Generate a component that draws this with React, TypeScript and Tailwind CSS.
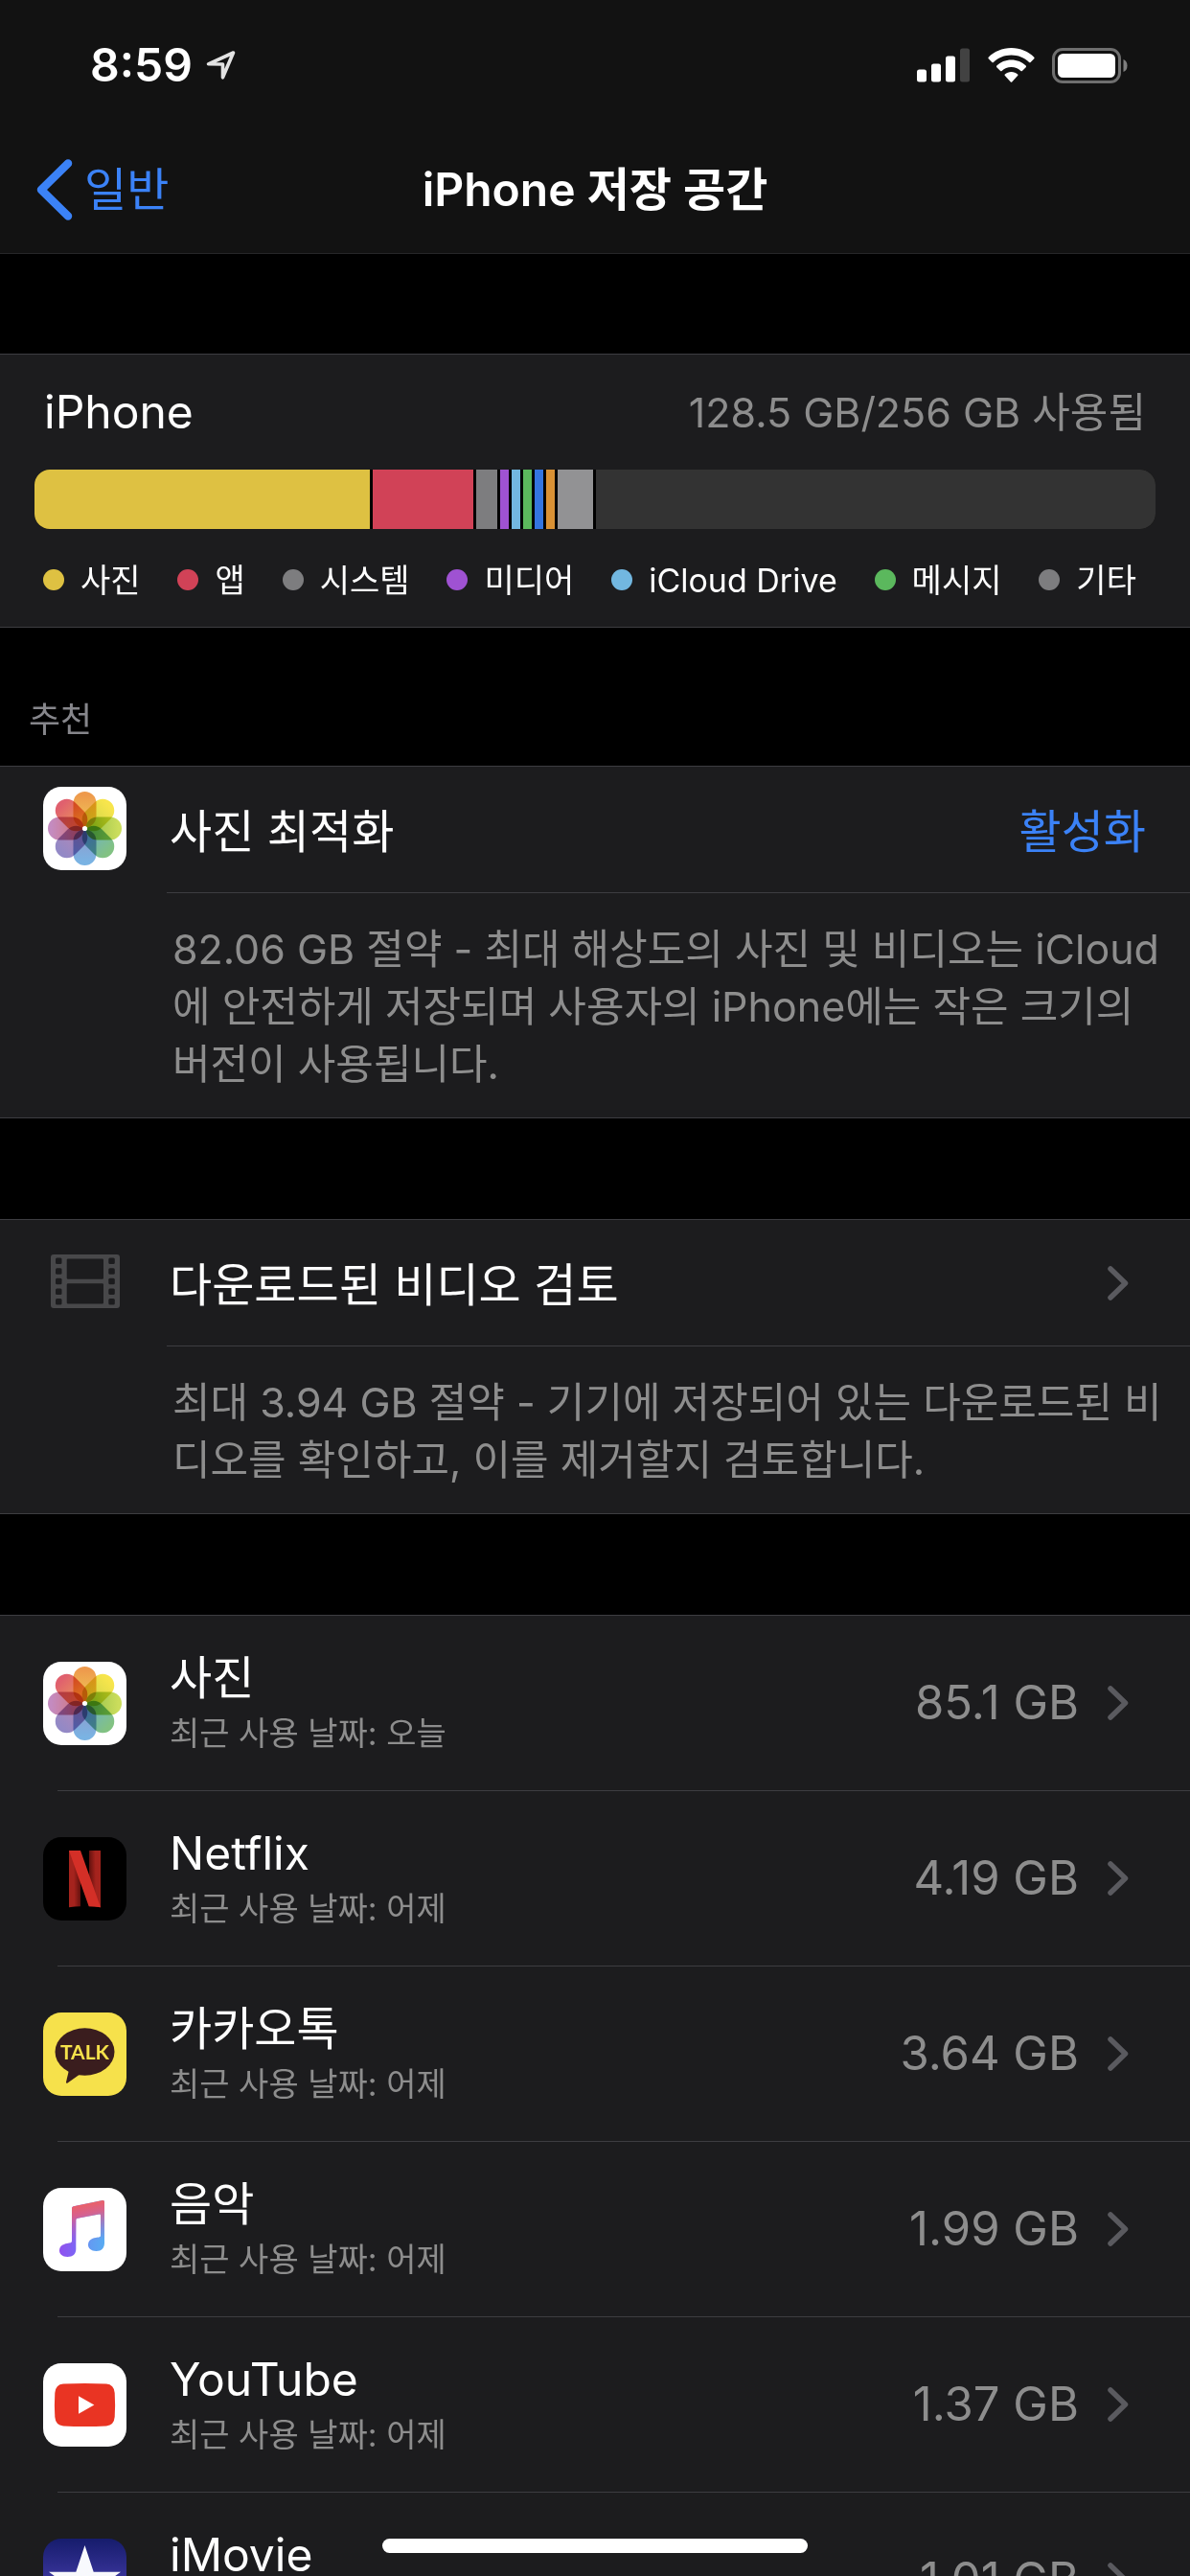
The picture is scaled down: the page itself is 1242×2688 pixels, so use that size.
import type { ReactNode } from 'react';

const segments = [
  { name: '사진', size: 350, color: 'bg-[#dec142]' },
  { name: '앱', size: 105, color: 'bg-[#d14257]' },
  { name: '시스템', size: 22, color: 'bg-[#7d7d7f]' },
  { name: '미디어', size: 9, color: 'bg-[#9f52d2]' },
  { name: 'iCloud Drive', size: 9, color: 'bg-[#72b7e0]' },
  { name: '메시지', size: 9, color: 'bg-[#5bb85d]' },
  { name: 'Mail', size: 9, color: 'bg-[#3475e0]' },
  { name: 'Books', size: 9, color: 'bg-[#d99134]' },
  { name: '기타', size: 38, color: 'bg-[#929294]' },
  { name: '여유 공간', size: 584, color: 'bg-[#333333]' },
];

const legend = [
  { name: '사진', color: 'bg-[#dec142]' },
  { name: '앱', color: 'bg-[#d14257]' },
  { name: '시스템', color: 'bg-[#7d7d7f]' },
  { name: '미디어', color: 'bg-[#9f52d2]' },
  { name: 'iCloud Drive', color: 'bg-[#72b7e0]' },
  { name: '메시지', color: 'bg-[#5bb85d]' },
  { name: '기타', color: 'bg-[#7d7d7f]' },
];

// clockwise from the top, outer colour then inner colour
const petals = [
  ['#ee9a4c', '#efc056'],
  ['#f7e54c', '#d6d84a'],
  ['#cbdd5c', '#9fc64e'],
  ['#82c283', '#72b4bb'],
  ['#7ab3e3', '#8c9fd0'],
  ['#9389c6', '#b088b8'],
  ['#c48bc0', '#d07884'],
  ['#e0606e', '#e98f5c'],
];

const PhotosIcon = () => (
  <svg viewBox="0 0 87 87" className="size-[87px] shrink-0" aria-hidden="true">
    <defs>
      {petals.map(([outer, inner], i) => (
        <linearGradient key={i} id={`petal-${i}`} x1="0" y1="0" x2="0" y2="1">
          <stop offset="0.1" stopColor={outer} />
          <stop offset="0.75" stopColor={inner} />
        </linearGradient>
      ))}
    </defs>
    <rect width="87" height="87" rx="19" fill="#fff" />
    <g className="isolate">
      {petals.map((_, i) => (
        <rect
          key={i}
          x="31.5"
          y="5"
          width="24"
          height="37.5"
          rx="12"
          fill={`url(#petal-${i})`}
          transform={`rotate(${i * 45} 43.5 43.5)`}
          className="mix-blend-multiply"
        />
      ))}
    </g>
    <circle cx="43.5" cy="43.5" r="2.6" fill="#fff" />
  </svg>
);

const NetflixIcon = () => (
  <svg viewBox="0 0 87 87" className="size-[87px] shrink-0" aria-hidden="true">
    <defs>
      <linearGradient id="nf-left" x1="0" y1="0.35" x2="1" y2="0.25">
        <stop offset="0.4" stopColor="#a5231d" />
        <stop offset="1" stopColor="#5c0f0c" />
      </linearGradient>
      <linearGradient id="nf-right" x1="1" y1="0.65" x2="0" y2="0.75">
        <stop offset="0.4" stopColor="#a5231d" />
        <stop offset="1" stopColor="#5c0f0c" />
      </linearGradient>
    </defs>
    <rect width="87" height="87" rx="19" fill="#000" />
    <path d="M27 14h12v58.300q-6 .2-12 .9z" fill="url(#nf-left)" />
    <path d="M48 14h12v59.200q-6-.7-12-.9z" fill="url(#nf-right)" />
    <path d="M27 14h12l21 59.200q-6-.8-12.300-.9z" fill="#d42f27" />
  </svg>
);

const KakaoIcon = () => (
  <svg viewBox="0 0 87 87" className="size-[87px] shrink-0" aria-hidden="true">
    <rect width="87" height="87" rx="19" fill="#f6e14b" />
    <ellipse cx="43.500" cy="41" rx="31" ry="24.700" fill="#3a1d1e" />
    <path d="M27 60l-3 12.500q-.2 2 1.600 1L39 64z" fill="#3a1d1e" />
    <text
      x="43.500"
      y="49"
      textAnchor="middle"
      fill="#f6e14b"
      className="font-['Lato',sans-serif] text-[21px] font-bold"
    >
      TALK
    </text>
  </svg>
);

const notePath =
  'M30 21.500q0-1.800 1.800-2.200l30.200-6.300q2-.3 2 1.500V57.500C64 62.500 61 66 55.500 66C50 66 47 63 47 59.500C47 55 50.500 52.500 55 52C58.500 51.500 60 51.500 60 49.500V28.500q0-1.300-1.500-1L35.800 31.700q-1.500.3-1.500 1.600V64C34.300 69 31 72 25.500 72C20 72 17 69 17 65.500C17 61 20.500 58.800 25 58C28.500 57.400 30 57.400 30 55.500z';

const MusicIcon = () => (
  <svg viewBox="0 0 87 87" className="size-[87px] shrink-0" aria-hidden="true">
    <defs>
      <linearGradient id="note-base" x1="17" y1="0" x2="64" y2="0" gradientUnits="userSpaceOnUse">
        <stop offset="0" stopColor="#9050ee" />
        <stop offset="0.4" stopColor="#7a68f6" />
        <stop offset="0.7" stopColor="#629cf2" />
        <stop offset="1" stopColor="#58acf2" />
      </linearGradient>
      <linearGradient id="note-top" x1="34" y1="16" x2="42" y2="58" gradientUnits="userSpaceOnUse">
        <stop offset="0" stopColor="#f0605f" />
        <stop offset="0.3" stopColor="#dc6088" stopOpacity="0.950" />
        <stop offset="1" stopColor="#b060d0" stopOpacity="0" />
      </linearGradient>
    </defs>
    <rect width="87" height="87" rx="19" fill="#fff" />
    <path d={notePath} fill="url(#note-base)" />
    <path d={notePath} fill="url(#note-top)" />
  </svg>
);

const YouTubeIcon = () => (
  <svg viewBox="0 0 87 87" className="size-[87px] shrink-0" aria-hidden="true">
    <rect width="87" height="87" rx="19" fill="#fff" />
    <path
      d="M21 21.600Q43.500 20.300 66 21.600Q74 22.300 74.700 31Q75.500 43.500 74.700 56Q74 64.700 66 65.400Q43.500 66.700 21 65.400Q13 64.700 12.300 56Q11.500 43.500 12.300 31Q13 22.300 21 21.600z"
      fill="#e93423"
    />
    <path d="M37 34.300v18.400l16.300-9.200z" fill="#fff" />
  </svg>
);

const IMovieIcon = () => (
  <svg viewBox="0 0 87 87" className="size-[87px] shrink-0" aria-hidden="true">
    <defs>
      <linearGradient id="imovie-bg" x1="0" y1="0" x2="0" y2="1">
        <stop offset="0" stopColor="#161c6c" />
        <stop offset="0.5" stopColor="#3a359c" />
        <stop offset="1" stopColor="#8a4fc0" />
      </linearGradient>
    </defs>
    <rect width="87" height="87" rx="19" fill="url(#imovie-bg)" />
    <path
      d="M43.500 7l9.200 27.700H81L58.300 51.500l8.700 27L43.500 62 20 78.500l8.700-27L6 34.700h28.300z"
      fill="#f8f9fd"
    />
  </svg>
);

const FilmIcon = () => (
  <svg viewBox="0 0 72 56" className="ml-2 h-14 w-[72px] shrink-0" fill="#48484a" aria-hidden="true">
    <path
      fillRule="evenodd"
      d="M3 0h66a3 3 0 0 1 3 3v50a3 3 0 0 1-3 3H3a3 3 0 0 1-3-3V3a3 3 0 0 1 3-3zM18 4.500q-1.300 0-1.300 1.300V24.500q0 1.300 1.300 1.300H53.700q1.300 0 1.300-1.300V5.800q0-1.300-1.300-1.300zM18 30.200q-1.300 0-1.300 1.300V50.200q0 1.300 1.300 1.300H53.700q1.300 0 1.300-1.300V31.500q0-1.300-1.300-1.300z"
    />
    {[3.5, 14.2, 24.8, 35.4, 46].map((y) => (
      <g key={y} fill="#1c1c1e">
        <rect x="5" y={y} width="6.500" height="6.500" rx="1.500" />
        <rect x="60.300" y={y} width="6.500" height="6.500" rx="1.500" />
      </g>
    ))}
  </svg>
);

const Chevron = () => (
  <svg viewBox="0 0 22 36" className="h-9 w-[22px] shrink-0" fill="none" aria-hidden="true">
    <path d="M3 3l15.500 15L3 33" stroke="#5a5a5f" strokeWidth="5.500" strokeLinecap="round" strokeLinejoin="round" />
  </svg>
);

const apps = [
  { name: '사진', used: '오늘', size: '85.1 GB', icon: PhotosIcon },
  { name: 'Netflix', used: '어제', size: '4.19 GB', icon: NetflixIcon },
  { name: '카카오톡', used: '어제', size: '3.64 GB', icon: KakaoIcon },
  { name: '음악', used: '어제', size: '1.99 GB', icon: MusicIcon },
  { name: 'YouTube', used: '어제', size: '1.37 GB', icon: YouTubeIcon },
  { name: 'iMovie', used: '어제', size: '1.01 GB', icon: IMovieIcon },
];

const StatusBar = () => (
  <div className="flex h-[132px] items-center justify-between pt-1 pr-16 pl-[94px]">
    <div className="flex items-center gap-[14px]">
      <span className="text-5xl font-semibold">8:59</span>
      <svg viewBox="0 0 32 32" className="size-8" fill="none" aria-hidden="true">
        <path d="M2.500 14.800L28.500 3 17.500 28.800V15z" stroke="#e2e2e2" strokeWidth="3.600" strokeLinejoin="round" />
      </svg>
    </div>
    <div className="flex items-center gap-[18px]">
      <svg viewBox="0 0 56 36" className="h-9 w-14" fill="#fff" aria-hidden="true">
        <rect x="0" y="22.500" width="10" height="13" rx="2.500" />
        <rect x="15" y="16.500" width="10" height="19" rx="2.500" />
        <rect x="30" y="8.500" width="10" height="27" rx="2.500" />
        <rect x="45" y="0.500" width="10" height="35" rx="2.500" fill="#424242" />
      </svg>
      <svg viewBox="0 0 49 36" className="h-9 w-[49px]" fill="#fff" aria-hidden="true">
        <path d="M24.500 0C34 0 42.500 3.800 48.300 9.700q.7.800 0 1.600L44.600 15q-.8.700-1.500 0C38.200 10.300 31.700 7.600 24.500 7.600S10.800 10.300 5.900 15q-.7.700-1.500 0L.7 11.300q-.7-.8 0-1.600C6.500 3.800 15 0 24.500 0z" />
        <path d="M24.500 12.600c6 0 11.300 2.300 15.200 6q.8.800 0 1.600l-3.800 3.700q-.7.700-1.500 0c-2.600-2.400-6-3.800-9.900-3.800s-7.300 1.400-9.900 3.800q-.8.700-1.500 0l-3.800-3.700q-.8-.8 0-1.600c3.900-3.700 9.200-6 15.200-6z" />
        <path d="M24.500 25c2.600 0 4.900 1 6.600 2.600q.7.700 0 1.500l-5.900 6.300q-.7.700-1.400 0l-5.900-6.300q-.7-.8 0-1.500C19.600 26 21.900 25 24.500 25z" />
      </svg>
      <svg viewBox="0 0 80 37" className="h-[37px] w-20" aria-hidden="true">
        <rect x="1.500" y="1.500" width="69" height="34" rx="9.500" fill="none" stroke="#6f6f6f" strokeWidth="3" />
        <rect x="6" y="6" width="60" height="25" rx="5.500" fill="#fff" />
        <path d="M74.500 12q4 1.500 4 6.500t-4 6.500z" fill="#7f7f7f" />
      </svg>
    </div>
  </div>
);

const NavBar = () => (
  <nav className="grid h-[132px] grid-cols-[1fr_auto_1fr] items-center px-[38px]">
    <a href="#general" className="flex items-center gap-3 text-5xl text-[#3b82f7]">
      <svg viewBox="0 0 38 64" className="h-16 w-[38px]" fill="none" aria-hidden="true">
        <path d="M33 4.500L5 32l28 27.500" stroke="currentColor" strokeWidth="8.500" strokeLinecap="round" strokeLinejoin="round" />
      </svg>
      일반
    </a>
    <h1 className="text-5xl font-semibold">iPhone 저장 공간</h1>
  </nav>
);

const StorageUsage = () => (
  <section className="mt-[104px] border-y border-[#3d3d41] bg-[#1c1c1e] px-9 py-6">
    <div className="flex h-[72px] items-center justify-between px-[10px]">
      <h2 className="text-5xl">iPhone</h2>
      <p className="text-[43px] text-[#8d8d8d]">128.5 GB/256 GB 사용됨</p>
    </div>
    <div className="mt-6 flex h-[62px] gap-[3px] overflow-hidden rounded-2xl bg-black">
      {segments.map((s) => (
        <div key={s.name} className={`basis-0 ${s.color}`} style={{ flexGrow: s.size }} />
      ))}
    </div>
    <ul className="mt-7 flex h-[50px] items-center justify-between pr-[20px] pl-[9px]">
      {legend.map((l) => (
        <li key={l.name} className="flex items-center gap-[17px] text-[34px] whitespace-nowrap">
          <span className={`size-[22px] rounded-full ${l.color}`} />
          {l.name}
        </li>
      ))}
    </ul>
  </section>
);

type SuggestionProps = {
  icon: ReactNode;
  title: string;
  action: ReactNode;
  children: ReactNode;
};

const Suggestion = ({ icon, title, action, children }: SuggestionProps) => (
  <section className="flex border-y border-[#3d3d41] bg-[#1c1c1e]">
    <div className="flex h-[128px] w-[174px] shrink-0 items-center pl-[45px]">{icon}</div>
    <div className="flex-1">
      <div className="flex h-[132px] items-center justify-between border-b border-[#3d3d41] pr-[46px] pl-[3px]">
        <h3 className="pt-1 text-5xl">{title}</h3>
        {action}
      </div>
      <p className="pt-7 pr-7 pb-[26px] pl-[6px] text-[43px] leading-[60px] text-[#8d8d8d]">{children}</p>
    </div>
  </section>
);

const AppList = () => (
  <ul className="mt-[105px] border-t border-[#3d3d41] bg-[#1c1c1e]">
    {apps.map((app) => {
      const Icon = app.icon;
      return (
        <li key={app.name}>
          <a href={`#${app.name}`} className="flex h-[182px] items-center pr-16 pl-[45px]">
            <Icon />
            <div className="ml-[45px] flex-1">
              <p className="text-5xl leading-[64px]">{app.name}</p>
              <p className="text-[34px] leading-[52px] text-[#8d8d8d]">최근 사용 날짜: {app.used}</p>
            </div>
            <span className="mr-[30px] text-[49px] text-[#8d8d8d]">{app.size}</span>
            <Chevron />
          </a>
          <div className="ml-[60px] h-px bg-[#3d3d41]" />
        </li>
      );
    })}
  </ul>
);

const App = () => {
  return (
    <div className="relative h-screen overflow-hidden bg-black font-['Inter','Noto_Sans_CJK_KR',sans-serif] text-white">
      <header className="border-b border-[#262628] bg-[#121212]">
        <StatusBar />
        <NavBar />
      </header>
      <main>
        <StorageUsage />
        <h2 className="px-[30px] pt-[72px] pb-6 text-[36px] leading-[48px] text-[#86868b]">추천</h2>
        <Suggestion
          icon={<PhotosIcon />}
          title="사진 최적화"
          action={
            <button type="button" className="pt-1 text-5xl text-[#3b82f7]">
              활성화
            </button>
          }
        >
          82.06 GB 절약 - 최대 해상도의 사진 및 비디오는 iCloud에 안전하게 저장되며 사용자의 iPhone에는 작은 크기의 버전이 사용됩니다.
        </Suggestion>
        <div className="h-[105px]" />
        <Suggestion
          icon={<FilmIcon />}
          title="다운로드된 비디오 검토"
          action={
            <a href="#videos" aria-label="다운로드된 비디오 검토" className="pr-[18px]">
              <Chevron />
            </a>
          }
        >
          최대 3.94 GB 절약 - 기기에 저장되어 있는 다운로드된 비디오를 확인하고, 이를 제거할지 검토합니다.
        </Suggestion>
        <AppList />
      </main>
      {/* Home indicator */}
      <div className="absolute bottom-6 left-1/2 h-[15px] w-[444px] -translate-x-1/2 rounded-full bg-white" />
    </div>
  );
};

export default App;
